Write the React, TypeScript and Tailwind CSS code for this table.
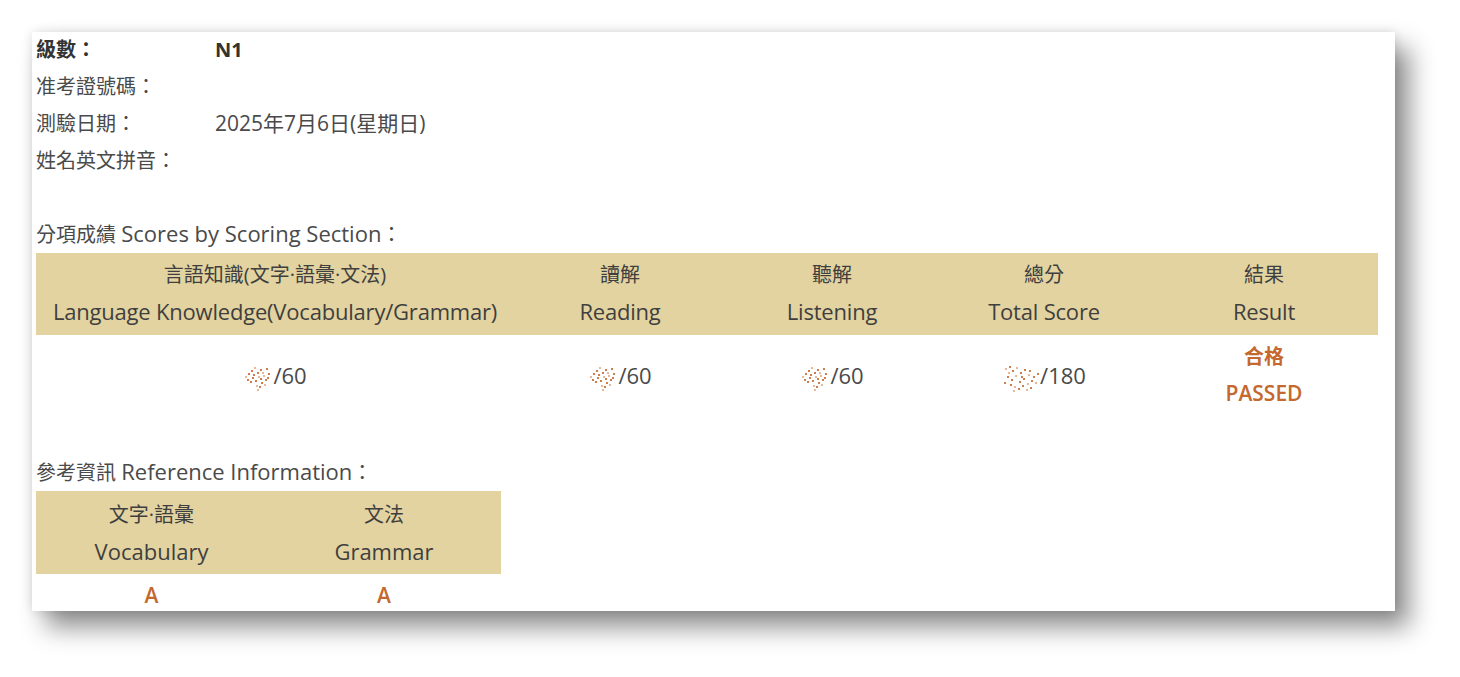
const font = { fontFamily: '"Open Sans", "Noto Sans CJK TC", sans-serif' };

function Hidden({ wide = false }: { wide?: boolean }) {
  // pixelated blur that covers the real score
  const dots = wide
    ? [[3, 4], [7, 2], [10, 6], [14, 3], [18, 8], [22, 5], [26, 10], [5, 12], [9, 15], [13, 11], [17, 17], [21, 14], [25, 19], [29, 16], [8, 20], [12, 22], [16, 24], [20, 21], [24, 25], [28, 23], [31, 12], [6, 8], [19, 12], [27, 6], [33, 18], [35, 9], [2, 18], [11, 26]]
    : [[2, 12], [5, 9], [8, 6], [11, 3], [14, 8], [17, 5], [20, 11], [9, 13], [12, 16], [15, 12], [18, 18], [22, 15], [13, 21], [16, 22], [7, 17], [19, 8], [23, 4], [10, 10], [21, 20], [25, 9], [24, 13], [14, 25], [4, 15], [17, 14]];
  const w = wide ? 38 : 30;
  return (
    <svg width={w} height="28" viewBox={`0 0 ${w} 28`} className="inline-block align-middle opacity-85">
      {dots.map(([x, y], i) => (
        <rect key={i} x={x} y={y} width="2" height="2" fill={i % 3 === 0 ? "#e6ad86" : "#c4682e"} />
      ))}
    </svg>
  );
}

const info = [
  { label: "級數：", value: "N1", bold: true },
  { label: "准考證號碼：", value: "" },
  { label: "測驗日期：", value: "2025年7月6日(星期日)" },
  { label: "姓名英文拼音：", value: "" },
];

const scoreHead = [
  ["言語知識(文字·語彙·文法)", "Language Knowledge(Vocabulary/Grammar)"],
  ["讀解", "Reading"],
  ["聽解", "Listening"],
  ["總分", "Total Score"],
  ["結果", "Result"],
];

export default function App() {
  return (
    <div className="min-h-screen bg-white pt-[32px] pl-[32px]" style={font}>
      <div className="w-[1363px] h-[579px] overflow-hidden bg-white pl-[4px] text-[#4a4a4a] shadow-[14px_16px_24px_rgba(0,0,0,0.45),0_0_10px_rgba(0,0,0,0.12)]">
        <div className="-mt-[1px]">
          {info.map((r) => (
            <div key={r.label} className="grid grid-cols-[179px_1fr] text-[20px] leading-[37px]">
              <div className={r.bold ? "font-bold text-[#333]" : ""}>{r.label}</div>
              <div className={r.bold ? "font-bold text-[#333]" : "text-[21px]"}>{r.value}</div>
            </div>
          ))}
        </div>

        <div className="mt-[36px] text-[20px] leading-[37px]">
          分項成績 <span className="text-[22px]">Scores by Scoring Section</span>：
        </div>
        <div className="w-[1342px]">
          <div className="grid grid-cols-[478px_212px_212px_212px_228px] bg-[#e3d3a0] pt-[4px] pb-[6px] text-center text-[20px] leading-[36px] text-[#3f3f3f]">
            {scoreHead.map(([zh, en]) => (
              <div key={en}>
                <div>{zh}</div>
                <div className="text-[22px] tracking-[-0.2px]">{en}</div>
              </div>
            ))}
          </div>
          <div className="grid grid-cols-[478px_212px_212px_212px_228px] items-center pt-[3px] text-center text-[22px] leading-[37px]">
            <div><Hidden />/60</div>
            <div><Hidden />/60</div>
            <div><Hidden />/60</div>
            <div><Hidden wide />/180</div>
            <div className="font-semibold text-[#c4682e]">
              <div className="text-[20px]">合格</div>
              <div className="text-[21px]">PASSED</div>
            </div>
          </div>
        </div>

        <div className="mt-[41px] text-[20px] leading-[37px]">
          參考資訊 <span className="text-[22px]">Reference Information</span>：
        </div>
        <div className="w-[465px]">
          <div className="grid grid-cols-[231px_234px] bg-[#e3d3a0] pt-[6px] pb-[5px] text-center text-[20px] leading-[36px] text-[#3f3f3f]">
            <div>
              <div>文字·語彙</div>
              <div className="text-[22px]">Vocabulary</div>
            </div>
            <div>
              <div>文法</div>
              <div className="text-[22px]">Grammar</div>
            </div>
          </div>
          <div className="grid grid-cols-[231px_234px] pt-[3px] text-center text-[21px] font-semibold leading-[37px] text-[#c4682e]">
            <div>A</div>
            <div>A</div>
          </div>
        </div>
      </div>
    </div>
  );
}
